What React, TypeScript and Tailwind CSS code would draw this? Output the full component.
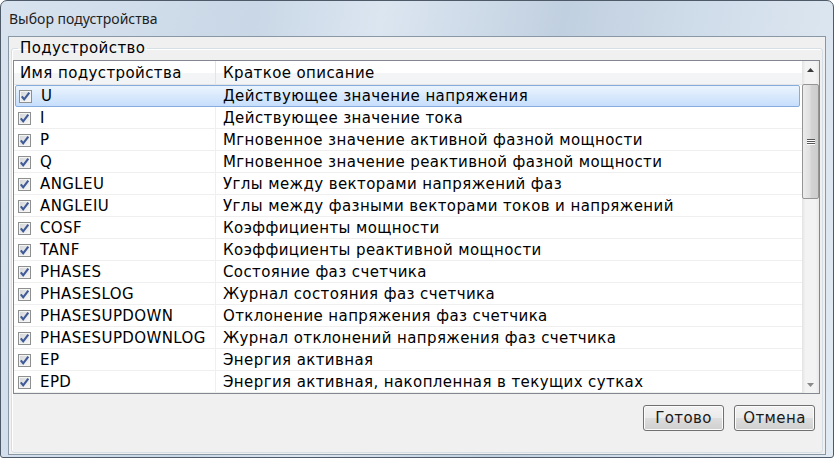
import React from 'react';

type Row = { name: string; desc: string };

const rows: Row[] = [
  { name: 'U', desc: 'Действующее значение напряжения' },
  { name: 'I', desc: 'Действующее значение тока' },
  { name: 'P', desc: 'Мгновенное значение активной фазной мощности' },
  { name: 'Q', desc: 'Мгновенное значение реактивной фазной мощности' },
  { name: 'ANGLEU', desc: 'Углы между векторами напряжений фаз' },
  { name: 'ANGLEIU', desc: 'Углы между фазными векторами токов и напряжений' },
  { name: 'COSF', desc: 'Коэффициенты мощности' },
  { name: 'TANF', desc: 'Коэффициенты реактивной мощности' },
  { name: 'PHASES', desc: 'Состояние фаз счетчика' },
  { name: 'PHASESLOG', desc: 'Журнал состояния фаз счетчика' },
  { name: 'PHASESUPDOWN', desc: 'Отклонение напряжения фаз счетчика' },
  { name: 'PHASESUPDOWNLOG', desc: 'Журнал отклонений напряжения фаз счетчика' },
  { name: 'EP', desc: 'Энергия активная' },
  { name: 'EPD', desc: 'Энергия активная, накопленная в текущих сутках' },
];

// чекбокс в стиле Windows 7
const CheckBox = () => (
  <svg width="13" height="13" viewBox="0 0 13 13" className="shrink-0">
    <defs>
      <linearGradient id="cbg" x1="0" y1="0" x2="1" y2="1">
        <stop offset="0" stopColor="#d4d6d9" />
        <stop offset="1" stopColor="#f7f7f7" />
      </linearGradient>
    </defs>
    <rect x="0.5" y="0.5" width="12" height="12" fill="#f4f4f4" stroke="#8e8f8f" />
    <rect x="2" y="2" width="9" height="9" fill="url(#cbg)" />
    <path d="M2.8 6.3 L5.2 9.3 L10.3 2.6" stroke="#3f5a96" strokeWidth="2.1" fill="none" />
  </svg>
);

const Arrow = ({ up }: { up?: boolean }) => (
  <svg width="7" height="4" viewBox="0 0 7 4">
    <path d={up ? 'M0 4 L3.5 0 L7 4 Z' : 'M0 0 L7 0 L3.5 4 Z'} fill={up ? '#3a3a3a' : '#8a8a8a'} />
  </svg>
);

const ScrollBar = () => (
  <div className="w-[17px] flex flex-col bg-[linear-gradient(90deg,#e3e3e3,#f3f3f3_20%,#f3f3f3_80%,#e8e8e8)]">
    <div className="h-[17px] flex items-center justify-center">
      <Arrow up />
    </div>
    <div className="flex-1 pt-[6px]">
      <div className="h-[115px] rounded-[2px] border border-[#959595] bg-[linear-gradient(90deg,#ececec,#e0e0e0_45%,#d3d3d3_55%,#cdcdcd)] flex items-center justify-center">
        <div className="flex flex-col gap-[1px]">
          <div className="w-[8px] h-[1px] bg-[#565656] shadow-[0_1px_0_#ffffff]" />
          <div className="w-[8px] h-[1px] bg-[#565656] shadow-[0_1px_0_#ffffff]" />
          <div className="w-[8px] h-[1px] bg-[#565656] shadow-[0_1px_0_#ffffff]" />
        </div>
      </div>
    </div>
    <div className="h-[17px] flex items-center justify-center">
      <Arrow />
    </div>
  </div>
);

const WinButton = ({ children }: { children: React.ReactNode }) => (
  <button className="w-[81px] h-[26px] rounded-[3px] border border-[#707070] bg-[linear-gradient(180deg,#f2f2f2_0%,#ebebeb_48%,#dddddd_52%,#cfcfcf_100%)] shadow-[inset_0_0_0_1px_#fcfcfc] text-[15px] tracking-[0.4px] text-[#1a1a1a] leading-none">
    {children}
  </button>
);

export default function App() {
  return (
    <div className="w-[834px] h-[458px] bg-white font-['DejaVu_Sans',sans-serif]">
      <div className="h-full flex flex-col rounded-t-[7px] rounded-b-[3px] border border-[#4e5a68] bg-[linear-gradient(100deg,#d8e3ef_0%,#c9d7e6_28%,#dce6f1_42%,#c1d0e0_62%,#d4e0ec_82%,#e2eaf3_100%)] px-[7px] pb-[2px]">
        {/* заголовок окна */}
        <div className="h-[35px] flex items-center pl-[1px] pb-[1px] font-['Noto_Sans',sans-serif] text-[14px] text-[#1e1e1e]">
          Выбор подустройства
        </div>

        <div className="flex-1 border border-[#8a97a5] bg-[#f0f0f0] pt-[2px] px-[2px] pb-[1px]">
          <fieldset className="h-[414px] flex flex-col rounded-[3px] border border-[#d5dfe5] pl-[1px] pr-[2px] pb-[21px] shadow-[inset_1px_1px_0_#ffffff]">
            <legend className="ml-[5px] px-[2px] h-[18px] text-[15px] tracking-[0.4px] leading-[18px] text-black">Подустройство</legend>

            {/* список */}
            <div className="mt-[3px] h-[334px] flex border border-[#828790] bg-white">
              <div className="flex-1 flex flex-col text-[15px] tracking-[0.4px] text-black">
                <div className="h-[24px] flex border-b border-[#e5e5e5] bg-[linear-gradient(180deg,#ffffff_0%,#ffffff_50%,#f4f5f7_51%,#f2f3f5_100%)]">
                  <div className="w-[202px] pl-[6px] pt-[2px] flex items-center border-r border-[#e2e4e7]">Имя подустройства</div>
                  <div className="flex-1 pl-[7px] pt-[2px] flex items-center">Краткое описание</div>
                </div>
                {rows.map((r, i) => (
                  <div
                    key={r.name}
                    className={
                      i === 0
                        ? 'h-[22px] flex mr-[2px] ml-[1px] rounded-[2px] border border-[#84acdd] bg-[linear-gradient(180deg,#ebf4fd,#c6defc)]'
                        : 'h-[22px] flex border-b border-[#efefef]'
                    }
                  >
                    <div
                      className={
                        i === 0
                          ? 'w-[200px] pl-[3px] pt-[1px] flex items-center gap-[9px]'
                          : 'w-[202px] pl-[4px] pt-[1px] flex items-center gap-[9px] border-r border-[#efefef]'
                      }
                    >
                      <CheckBox />
                      <span className="leading-none">{r.name}</span>
                    </div>
                    <div className="flex-1 pl-[7px] pt-[1px] flex items-center whitespace-nowrap">{r.desc}</div>
                  </div>
                ))}
              </div>
              <ScrollBar />
            </div>

            {/* кнопки */}
            <div className="mt-[11px] flex justify-end gap-[10px] pr-[5px]">
              <WinButton>Готово</WinButton>
              <WinButton>Отмена</WinButton>
            </div>
          </fieldset>
        </div>
      </div>
    </div>
  );
}
